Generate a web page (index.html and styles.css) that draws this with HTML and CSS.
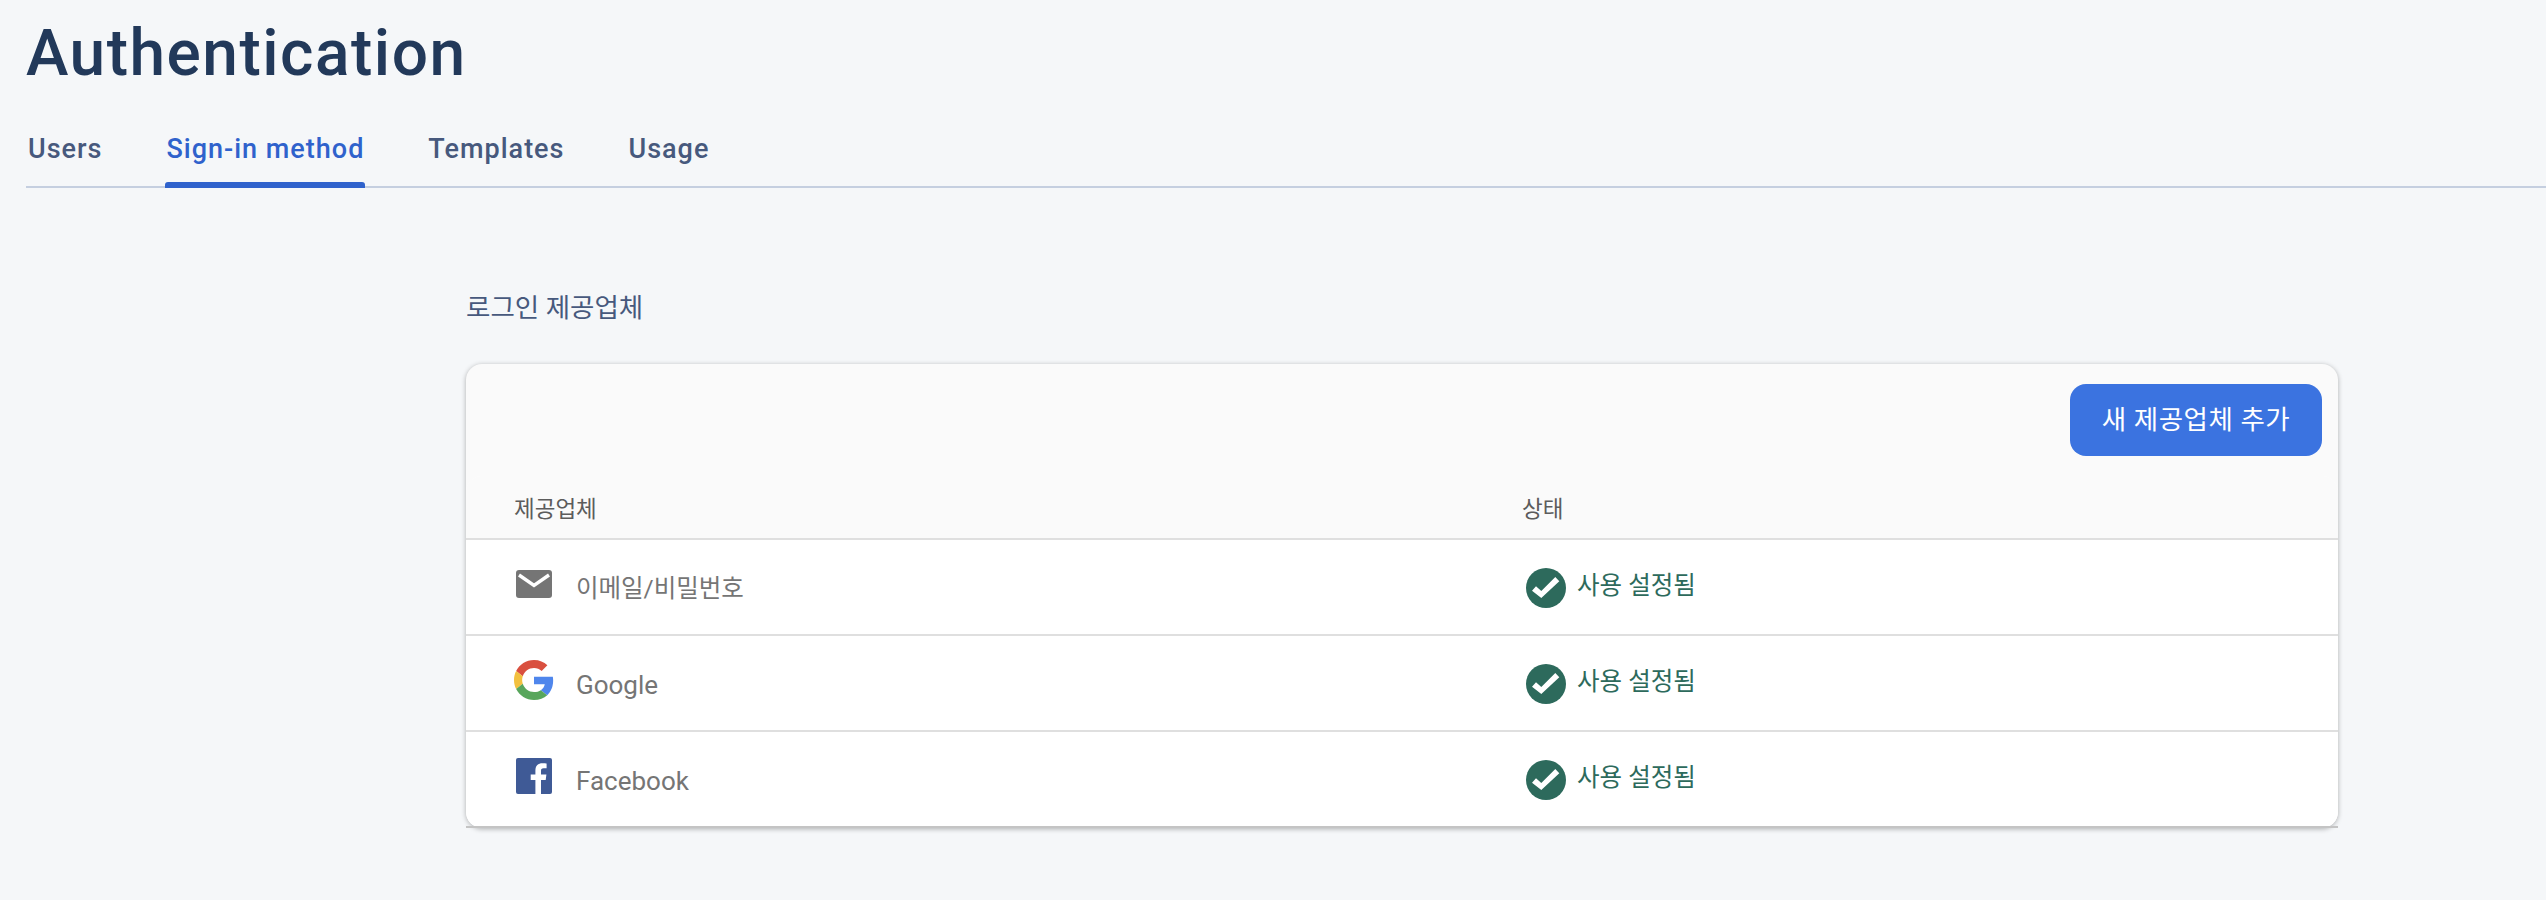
FILE: index.html
```html
<!DOCTYPE html>
<html lang="ko">
<head>
<meta charset="utf-8">
<title>Authentication</title>
<link rel="stylesheet" href="styles.css">
</head>
<body>
<header class="top">
  <h1 class="title">Authentication</h1>
  <nav class="tabs">
    <a class="tab">Users</a>
    <a class="tab active">Sign-in method</a>
    <a class="tab">Templates</a>
    <a class="tab">Usage</a>
  </nav>
</header>
<main class="content">
  <h2 class="section">로그인 제공업체</h2>
  <section class="card">
    <div class="toolbar"><button class="add">새 제공업체 추가</button></div>
    <div class="table">
      <div class="row head">
        <div class="c1">제공업체</div>
        <div class="c2">상태</div>
      </div>
      <div class="row">
        <div class="c1 provider">
          <svg class="picon mail" viewBox="0 0 36 28"><rect width="36" height="28" rx="3" fill="#757575"/><path fill="none" stroke="#fff" stroke-width="3.4" d="M3 5l15 10.500L33 5"/></svg>
          <span class="pname ko">이메일/비밀번호</span>
        </div>
        <div class="c2 status">
          <svg class="check" viewBox="0 0 40 40"><circle cx="20" cy="20" r="20" fill="#2d6a5c"/><path fill="#fff" d="M6 22.700l4-4.400 5.300 4.700 14-14 4 4.300-18 16.700z"/></svg>
          <span>사용 설정됨</span>
        </div>
      </div>
      <div class="row">
        <div class="c1 provider">
          <svg class="picon google" viewBox="0 0 48 48"><path fill="#d9503f" d="M24 9.500c3.540 0 6.710 1.220 9.210 3.600l6.850-6.850C35.900 2.380 30.470 0 24 0 14.620 0 6.510 5.380 2.560 13.220l7.980 6.190C12.430 13.720 17.740 9.500 24 9.500z"/><path fill="#4f86ec" d="M46.980 24.550c0-1.570-.15-3.090-.38-4.550H24v9.020h12.940c-.58 2.960-2.260 5.480-4.780 7.180l7.730 6c4.510-4.180 7.090-10.360 7.090-17.650z"/><path fill="#f2c03e" d="M10.530 28.590c-.48-1.450-.76-2.990-.76-4.590s.27-3.140.76-4.590l-7.980-6.190C.92 16.460 0 20.120 0 24c0 3.880.92 7.540 2.560 10.780l7.970-6.190z"/><path fill="#58a65c" d="M24 48c6.480 0 11.930-2.130 15.890-5.810l-7.730-6c-2.150 1.450-4.920 2.300-8.160 2.300-6.260 0-11.570-4.220-13.470-9.910l-7.980 6.190C6.510 42.620 14.620 48 24 48z"/></svg>
          <span class="pname">Google</span>
        </div>
        <div class="c2 status">
          <svg class="check" viewBox="0 0 40 40"><circle cx="20" cy="20" r="20" fill="#2d6a5c"/><path fill="#fff" d="M6 22.700l4-4.400 5.300 4.700 14-14 4 4.300-18 16.700z"/></svg>
          <span>사용 설정됨</span>
        </div>
      </div>
      <div class="row">
        <div class="c1 provider">
          <svg class="picon fb" viewBox="0 0 36 36"><rect width="36" height="36" rx="2" fill="#3f5a96"/><path fill="#fff" d="M25 36V22h4.700l.7-5.500H25V13c0-1.600.4-2.700 2.700-2.700h2.900V5.400c-.5-.1-2.200-.2-4.200-.2-4.200 0-7 2.500-7 7.200v4.100H14.700V22h4.700v14z"/></svg>
          <span class="pname">Facebook</span>
        </div>
        <div class="c2 status">
          <svg class="check" viewBox="0 0 40 40"><circle cx="20" cy="20" r="20" fill="#2d6a5c"/><path fill="#fff" d="M6 22.700l4-4.400 5.300 4.700 14-14 4 4.300-18 16.700z"/></svg>
          <span>사용 설정됨</span>
        </div>
      </div>
    </div>
  </section>
</main>
</body>
</html>
```
FILE: styles.css
```css
* { box-sizing: border-box; }
html, body { margin: 0; height: 100%; }
body {
  background: #f5f7f9;
  font-family: Roboto, "Noto Sans CJK KR", sans-serif;
  overflow: hidden;
}
.top { padding: 0 0 0 26px; }
.title {
  margin: 0;
  padding-top: 16px;
  height: 88px;
  font-family: Roboto, sans-serif;
  font-size: 64px;
  line-height: 75px;
  font-weight: 500;
  color: #22395a;
  letter-spacing: 1.500px;
}
.tabs {
  display: flex;
  gap: 60px;
  height: 100px;
  border-bottom: 2px solid #c5cfe0;
}
.tab {
  position: relative;
  display: flex;
  align-items: center;
  height: 98px;
  padding: 24px 2px 0;
  font-size: 27px;
  font-weight: 500;
  color: #47597d;
  letter-spacing: 1px;
}
.tab.active { color: #2f62cc; }
.tab.active::after {
  content: "";
  position: absolute;
  left: 1px;
  right: 1px;
  bottom: -2px;
  height: 6px;
  background: #2f62cc;
  border-radius: 3px 3px 0 0;
}
.content { padding: 0 208px 0 466px; }
.section {
  margin: 0;
  padding-top: 101px;
  height: 176px;
  font-size: 26.500px;
  line-height: 38px;
  font-weight: 400;
  color: #47597d;
}
.card {
  width: 1872px;
  background: #fafafa;
  border-radius: 16px;
  box-shadow: 0 1px 5px rgba(0, 0, 0, 0.3);
}
.toolbar {
  display: flex;
  justify-content: flex-end;
  height: 112px;
  padding: 20px 16px 0 0;
}
.add {
  width: 252px;
  height: 72px;
  padding: 0 0 5px;
  border: 0;
  border-radius: 16px;
  background: #3b73e0;
  color: #fff;
  font-family: Roboto, "Noto Sans CJK KR", sans-serif;
  font-size: 26.500px;
  letter-spacing: 0.500px;
}
.table { background: #fff; border-radius: 16px; }
.row {
  display: flex;
  height: 96px;
  border-bottom: 2px solid #dfdfdf;
}
.row:last-child { border-bottom-color: #c4c4c4; }
.row.head {
  height: 64px;
  background: #fafafa;
  border-radius: 16px 16px 0 0;
  font-size: 22.500px;
  color: #5c5c5c;
  align-items: center;
}
.c1 { width: 1056px; padding-left: 48px; }
.provider { display: flex; align-items: flex-start; }
.picon { width: 40px; height: 40px; flex: none; }
.mail { width: 36px; height: 28px; margin: 30px 2px 0; }
.google { margin-top: 24px; }
.fb { width: 36px; height: 36px; margin: 26px 2px 0; }
.pname {
  margin-left: 22px;
  margin-top: 30px;
  font-size: 26px;
  line-height: 38px;
  color: #757575;
}
.pname.ko { font-size: 24.500px; }
.status {
  display: flex;
  align-items: center;
  gap: 11px;
  padding-left: 4px;
  font-size: 24.500px;
  color: #2d6a5c;
  height: 94px;
}
.check { width: 40px; height: 40px; flex: none; margin-top: 2px; }
.status span { margin-bottom: 7px; }
```
